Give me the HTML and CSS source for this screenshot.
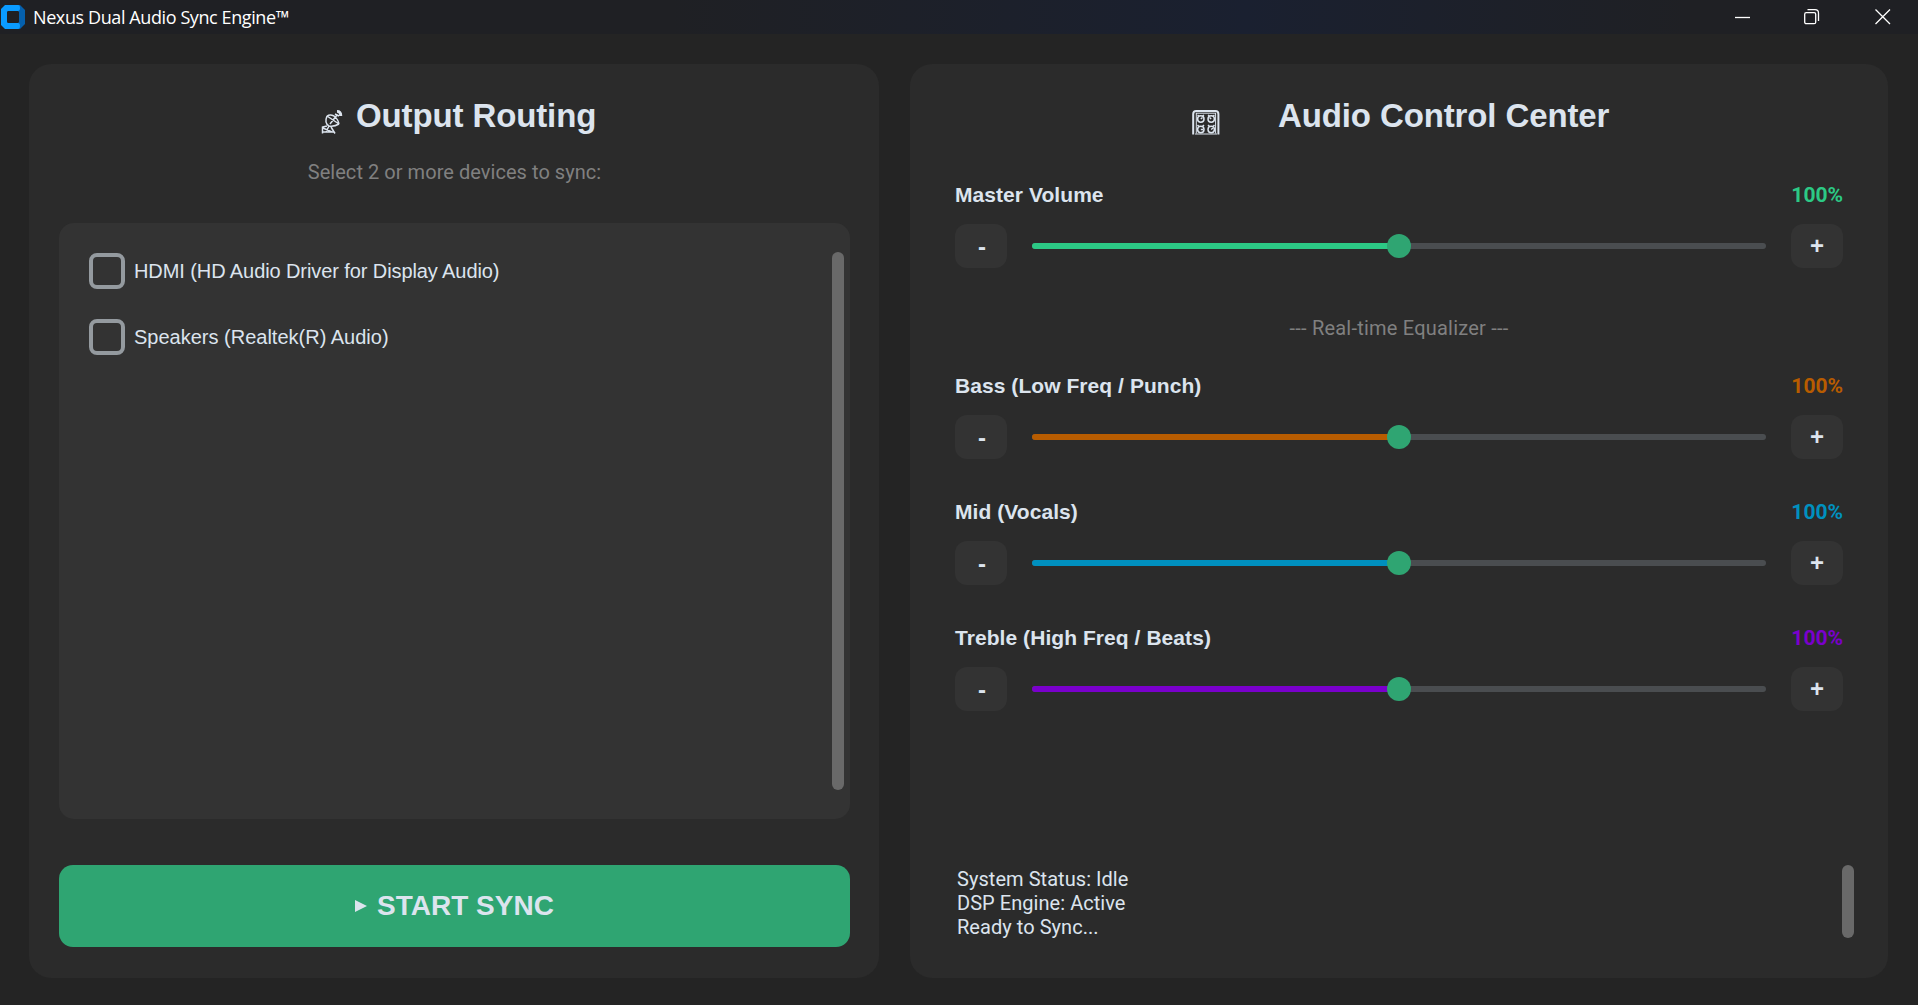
FILE: index.html
```html
<!DOCTYPE html>
<html lang="en">
<head>
    <meta charset="UTF-8">
    <meta name="viewport" content="width=device-width, initial-scale=1.0">
    <title>Nexus Dual Audio Sync Engine™</title>
    <link rel="stylesheet" href="styles.css">
</head>
<body>
    <header class="titlebar">
        <svg class="app-icon" width="24" height="24" viewBox="0 0 24 24">
            <path d="M5 0H19L24 5V19L19 24H5L0 19V5Z" fill="#0560ad"/>
            <path d="M4 0H17Q19 0 19 3T17 6H7L6 7V17L7 18H17Q19 18 19 21T17 24H4L0 20V4Z" fill="#0a9bff"/>
            <path d="M7 6H17L18 7V17L17 18H7L6 17V7Z" fill="#1f2024"/>
        </svg>
        <span class="app-title">Nexus Dual Audio Sync Engine™</span>
        <div class="window-buttons">
            <svg width="16" height="16" viewBox="0 0 16 16"><path d="M0 8.5H15"/></svg>
            <svg class="restore" width="16" height="16" viewBox="0 0 16 16"><rect x=".7" y="3.7" width="11" height="11" rx="1.5"/><path d="M3.5 .7H11Q14.5 .7 14.5 4.2V12"/></svg>
            <svg width="16" height="16" viewBox="0 0 16 16"><path d="M.5 .5L15 15M15 .5L.5 15"/></svg>
        </div>
    </header>

    <main class="app">
        <section class="panel routing">
            <h1>
                <svg class="dish" width="22" height="24" viewBox="0 0 22 24">
                    <path d="M6 6Q3 13 8 16Q13 17 18 14M6 6L18 14M6 6Q9 4 13 6Q17 9 18 14M9 14L16 5M14 4L18 6M1.5 23.5V17L6 16M1.5 22H13M2 18L11 22M5 22L8 16M10 17L14 23.5M16 2Q19 2 19 6M16 .8Q20.5 .8 20.5 6"/>
                </svg>
                <span>Output Routing</span>
            </h1>
            <p class="hint">Select 2 or more devices to sync:</p>
            <div class="device-list">
                <div class="devices">
                    <label class="device"><span class="checkbox"></span><span class="device-name tight">HDMI (HD Audio Driver for Display Audio)</span></label>
                    <label class="device"><span class="checkbox"></span><span class="device-name">Speakers (Realtek(R) Audio)</span></label>
                </div>
                <div class="scrollbar"></div>
            </div>
            <button class="start">
                <svg width="12" height="12" viewBox="0 0 12 12"><path d="M0 0L12 6L0 12Z"/></svg>
                <span>START SYNC</span>
            </button>
        </section>

        <section class="panel control">
            <h1>
                <svg class="knobs" width="28" height="25" viewBox="0 0 28 25">
                    <path d="M1.2 24.5V4Q1.2 1 4.2 1H23.4Q26.4 1 26.4 4V24.5" stroke-width="2"/>
                    <path d="M4.3 3V23.5M23.6 3V23.5M4 3.2H24M3 24H25" stroke-width="1"/>
                    <circle cx="8.8" cy="9" r="3.2"/><circle cx="19.2" cy="9" r="3.2"/>
                    <circle cx="8.8" cy="19.5" r="3.2"/><circle cx="19.2" cy="19.5" r="3.2"/>
                    <path d="M8.8 9L10.5 7.5M19.2 9L17.5 7.5M8.8 19.5H11M19.2 19.5L21 18"/>
                    <path d="M5.5 5L7 6M12 5L10.5 6M16 5L17.5 6M22.5 5L21 6M5.5 15L7 16.5M12 15L10.5 16.5M16 15L17.5 16.5M22.5 15L21 16.5"/>
                </svg>
                <span>Audio Control Center</span>
            </h1>

            <div class="channel master">
                <div class="channel-head"><span>Master Volume</span><span class="value">100%</span></div>
                <div class="channel-row">
                    <button class="step minus">-</button>
                    <div class="slider"><div class="fill"></div><div class="knob"></div></div>
                    <button class="step">+</button>
                </div>
            </div>

            <p class="divider">--- Real-time Equalizer ---</p>

            <div class="channel bass">
                <div class="channel-head"><span>Bass (Low Freq / Punch)</span><span class="value">100%</span></div>
                <div class="channel-row">
                    <button class="step minus">-</button>
                    <div class="slider"><div class="fill"></div><div class="knob"></div></div>
                    <button class="step">+</button>
                </div>
            </div>
            <div class="channel mid">
                <div class="channel-head"><span>Mid (Vocals)</span><span class="value">100%</span></div>
                <div class="channel-row">
                    <button class="step minus">-</button>
                    <div class="slider"><div class="fill"></div><div class="knob"></div></div>
                    <button class="step">+</button>
                </div>
            </div>
            <div class="channel treble">
                <div class="channel-head"><span>Treble (High Freq / Beats)</span><span class="value">100%</span></div>
                <div class="channel-row">
                    <button class="step minus">-</button>
                    <div class="slider"><div class="fill"></div><div class="knob"></div></div>
                    <button class="step">+</button>
                </div>
            </div>

            <div class="status">
                <div class="log">
                    <div>System Status: Idle</div>
                    <div>DSP Engine: Active</div>
                    <div>Ready to Sync...</div>
                </div>
                <div class="scrollbar"></div>
            </div>
        </section>
    </main>
</body>
</html>
```
FILE: styles.css
```css
* {
    box-sizing: border-box;
}
body {
    margin: 0;
    height: 100vh;
    display: flex;
    flex-direction: column;
    overflow: hidden;
    background: #242424;
    color: #dce4ee;
    font-family: "Liberation Sans", Arial, sans-serif;
}
h1, p {
    margin: 0;
}
button {
    border: 0;
    padding: 0;
    color: inherit;
    font-family: inherit;
    font-weight: bold;
}

/* title bar */
.titlebar {
    height: 34px;
    display: flex;
    align-items: center;
    padding: 0 27px 0 1px;
    background: linear-gradient(90deg, #1f2024 0%, #1f2024 35%, #1a2030 65%, #1f2024 88%);
    color: #fff;
}
.app-title {
    margin-left: 8px;
    font-family: "Open Sans", "Noto Sans", sans-serif;
    font-size: 18px;
    line-height: 24px;
    letter-spacing: -0.4px;
}
.window-buttons {
    display: flex;
    gap: 54px;
    margin-left: auto;
}
.window-buttons svg {
    fill: none;
    stroke: #fff;
    stroke-width: 1.3;
}
.window-buttons .restore {
    margin: 0 1px 0 -1px;
}

/* panels */
.app {
    flex: 1;
    display: flex;
    gap: 31px;
    padding: 30px 30px 27px 29px;
}
.panel {
    display: flex;
    flex-direction: column;
    border-radius: 22px;
    background: #2b2b2b;
}
.routing {
    width: 850px;
    padding: 33px 29px 31px 30px;
}
.control {
    flex: 1;
    padding: 33px 34px 31px 45px;
}
h1 {
    display: flex;
    height: 38px;
    font-size: 33px;
    line-height: 38px;
    letter-spacing: -0.12px;
}
h1 svg {
    margin-top: 13px;
    fill: none;
    stroke: #dce4ee;
    stroke-width: 1.5;
}
.dish {
    margin-left: 262px;
    margin-right: 13px;
}
.knobs {
    margin-left: 237px;
    margin-right: 58px;
}
.hint, .divider {
    font-family: Roboto, sans-serif;
    font-size: 20px;
    line-height: 24px;
    color: #808080;
    text-align: center;
}
.hint {
    margin-top: 25px;
    letter-spacing: 0.05px;
}

/* output devices */
.device-list {
    height: 596px;
    margin-top: 39px;
    padding: 29px 6px 29px 30px;
    display: flex;
    justify-content: space-between;
    border-radius: 15px;
    background: #333333;
}
.scrollbar {
    width: 12px;
    border-radius: 6px;
    background: #696969;
}
.devices {
    display: flex;
    flex-direction: column;
    gap: 30px;
    padding-top: 1px;
}
.device {
    display: flex;
    align-items: center;
    gap: 9px;
    height: 36px;
    font-size: 20px;
}
.tight {
    letter-spacing: -0.09px;
}
.checkbox {
    width: 36px;
    height: 36px;
    border: 4px solid #949a9f;
    border-radius: 8px;
}
.start {
    display: flex;
    align-items: center;
    justify-content: center;
    gap: 10px;
    height: 82px;
    margin-top: auto;
    border-radius: 14px;
    background: #2fa572;
    font-size: 28px;
}
.start svg {
    fill: #dce4ee;
}

/* volume and equalizer channels */
.channel {
    height: 85px;
    margin-right: 11px;
}
.master {
    margin-top: 48px;
    --level: #2cc985;
}
.bass {
    --level: #b85c00;
}
.mid {
    --level: #0090bf;
}
.treble {
    --level: #7a00cc;
}
.mid, .treble {
    margin-top: 41px;
}
.channel-head {
    display: flex;
    justify-content: space-between;
    height: 41px;
    font-size: 21px;
    font-weight: bold;
    line-height: 24px;
    letter-spacing: 0.06px;
}
.value {
    color: var(--level);
    font-family: Roboto, sans-serif;
    font-size: 21px;
    letter-spacing: 0;
}
.channel-row {
    display: flex;
    align-items: center;
    justify-content: space-between;
}
.step {
    width: 52px;
    height: 44px;
    border-radius: 12px;
    background: #333333;
    font-size: 24px;
    line-height: 40px;
}
.minus {
    padding: 1px 0 0 2px;
}
.slider {
    width: 734px;
    height: 6px;
    display: flex;
    align-items: center;
    border-radius: 3px;
    background: #4a4d50;
}
.fill {
    width: 50%;
    height: 6px;
    border-radius: 3px 0 0 3px;
    background: var(--level);
}
.knob {
    width: 24px;
    height: 24px;
    margin-left: -12px;
    border-radius: 50%;
    background: #2fa572;
}
.divider {
    margin: 48px 11px 34px 0;
    letter-spacing: 0.22px;
}

/* status log */
.status {
    display: flex;
    justify-content: space-between;
    height: 82px;
    margin-top: auto;
}
.log {
    padding: 2px;
    font-family: Roboto, sans-serif;
    font-size: 20px;
    line-height: 24px;
    letter-spacing: 0.05px;
}
.status .scrollbar {
    height: 73px;
}
```
